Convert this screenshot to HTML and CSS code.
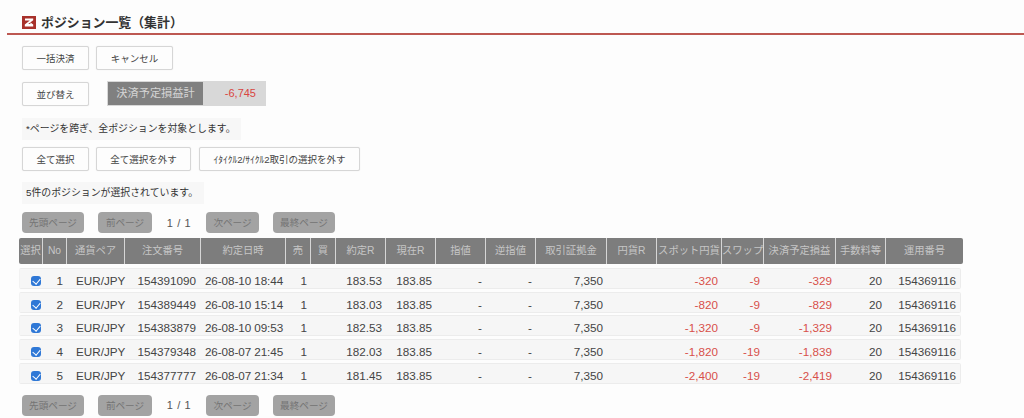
FILE: index.html
```html
<!DOCTYPE html>
<html lang="ja">
<head>
<meta charset="utf-8">
<title>ポジション一覧（集計）</title>
<link rel="stylesheet" href="styles.css">
</head>
<body>
<header class="title-bar">
  <svg class="logo" viewBox="0 0 14 13" width="14" height="13" aria-hidden="true">
    <rect width="14" height="13" fill="#a8312b"/>
    <path d="M3 2.6h8.2v1.7L6.2 8h2.2V6.6l2.8 1.8V10.4H2.8V8.6L7.8 4.4H3z" fill="#fff"/>
  </svg>
  <h1>ポジション一覧（集計）</h1>
</header>
<main class="content">
  <div class="btn-row first">
    <button class="btn w67">一括決済</button>
    <button class="btn w77">キャンセル</button>
  </div>
  <div class="btn-row second">
    <button class="btn w67">並び替え</button>
    <div class="total"><span class="total-label">決済予定損益計</span><span class="total-value">-6,745</span></div>
  </div>
  <p class="note note-a">*ページを跨ぎ、全ポジションを対象とします。</p>
  <div class="btn-row third">
    <button class="btn w67">全て選択</button>
    <button class="btn w95">全て選択を外す</button>
    <button class="btn w161">ｲﾀｲｸﾙ2/ｻｲｸﾙ2取引の選択を外す</button>
  </div>
  <p class="note note-b">5件のポジションが選択されています。</p>
  <nav class="pager top">
    <span class="pg w62">先頭ページ</span>
    <span class="pg w54">前ページ</span>
    <span class="count">1 / 1</span>
    <span class="pg w53">次ページ</span>
    <span class="pg w62">最終ページ</span>
  </nav>
</main>
<section class="grid-wrap">
  <div class="head">
    <div>選択</div><div>No</div><div>通貨ペア</div><div>注文番号</div><div>約定日時</div><div>売</div><div>買</div><div>約定R</div><div>現在R</div><div>指値</div><div>逆指値</div><div>取引証拠金</div><div>円貨R</div><div>スポット円貨</div><div>スワップ</div><div>決済予定損益</div><div>手数料等</div><div>運用番号</div>
  </div>
  <div class="rows">
    <div class="row"><span class="chk"><input type="checkbox" checked></span><span class="r">1</span><span class="l">EUR/JPY</span><span class="r">154391090</span><span class="c">26-08-10 18:44</span><span class="r">1</span><span></span><span class="r">183.53</span><span class="r">183.85</span><span class="r">-</span><span class="r">-</span><span class="r">7,350</span><span></span><span class="r red">-320</span><span class="r red">-9</span><span class="r red">-329</span><span class="r">20</span><span class="r">154369116</span></div>
    <div class="row"><span class="chk"><input type="checkbox" checked></span><span class="r">2</span><span class="l">EUR/JPY</span><span class="r">154389449</span><span class="c">26-08-10 15:14</span><span class="r">1</span><span></span><span class="r">183.03</span><span class="r">183.85</span><span class="r">-</span><span class="r">-</span><span class="r">7,350</span><span></span><span class="r red">-820</span><span class="r red">-9</span><span class="r red">-829</span><span class="r">20</span><span class="r">154369116</span></div>
    <div class="row"><span class="chk"><input type="checkbox" checked></span><span class="r">3</span><span class="l">EUR/JPY</span><span class="r">154383879</span><span class="c">26-08-10 09:53</span><span class="r">1</span><span></span><span class="r">182.53</span><span class="r">183.85</span><span class="r">-</span><span class="r">-</span><span class="r">7,350</span><span></span><span class="r red">-1,320</span><span class="r red">-9</span><span class="r red">-1,329</span><span class="r">20</span><span class="r">154369116</span></div>
    <div class="row"><span class="chk"><input type="checkbox" checked></span><span class="r">4</span><span class="l">EUR/JPY</span><span class="r">154379348</span><span class="c">26-08-07 21:45</span><span class="r">1</span><span></span><span class="r">182.03</span><span class="r">183.85</span><span class="r">-</span><span class="r">-</span><span class="r">7,350</span><span></span><span class="r red">-1,820</span><span class="r red">-19</span><span class="r red">-1,839</span><span class="r">20</span><span class="r">154369116</span></div>
    <div class="row"><span class="chk"><input type="checkbox" checked></span><span class="r">5</span><span class="l">EUR/JPY</span><span class="r">154377777</span><span class="c">26-08-07 21:34</span><span class="r">1</span><span></span><span class="r">181.45</span><span class="r">183.85</span><span class="r">-</span><span class="r">-</span><span class="r">7,350</span><span></span><span class="r red">-2,400</span><span class="r red">-19</span><span class="r red">-2,419</span><span class="r">20</span><span class="r">154369116</span></div>
  </div>
</section>
<nav class="pager bottom">
  <span class="pg w62">先頭ページ</span>
  <span class="pg w54">前ページ</span>
  <span class="count">1 / 1</span>
  <span class="pg w53">次ページ</span>
  <span class="pg w62">最終ページ</span>
</nav>
</body>
</html>
```
FILE: styles.css
```css
:root {
  --cols: 24px 24px 58px 76px 85px 25px 25px 50px 50px 50px 50px 71px 50px 65px 42px 72px 50px 77px;
}
* { box-sizing: border-box; }
html, body { margin: 0; padding: 0; }
body {
  width: 1024px;
  height: 418px;
  overflow: hidden;
  background: #fdfdfd;
  color: #444;
  font-family: "Liberation Sans", "Noto Sans CJK JP", sans-serif;
  font-size: 11.7px;
}
.title-bar {
  height: 35px;
  margin-left: 7px;
  padding: 16px 0 0 15px;
  display: flex;
  align-items: flex-start;
  gap: 5px;
  border-bottom: 2px solid #bd5852;
}
.logo { flex: none; }
h1 {
  margin: 0;
  font-size: 12.9px;
  line-height: 13px;
  font-weight: 700;
  color: #333;
}
.content { padding-left: 22px; }
.btn-row { display: flex; gap: 7px; align-items: center; }
.btn-row.first { margin-top: 11px; }
.btn-row.second { margin-top: 11px; gap: 18px; }
.btn-row.third { margin-top: 7px; gap: 7px; }
.btn {
  height: 24px;
  padding: 0;
  background: #fdfdfd;
  border: 1px solid #d6d6d6;
  border-radius: 2px;
  box-shadow: 0 0 1px #ddd;
  font: 9.5px "Liberation Sans", "Noto Sans CJK JP", sans-serif;
  color: #444;
}
.w67 { width: 67px; }
.w77 { width: 77px; }
.w95 { width: 95px; }
.w161 { width: 161px; }
.third .w161 { margin-left: 1px; }
.total {
  width: 159px;
  height: 25px;
  padding: 1px;
  display: flex;
  background: #d8d8d8;
}
.total-label {
  width: 95px;
  height: 23px;
  background: #808080;
  color: #d5d5d5;
  font-size: 11.2px;
  line-height: 22px;
  text-align: center;
}
.total-value {
  flex: 1;
  text-align: right;
  padding-right: 9px;
  color: #d8453f;
  font-size: 11px;
  line-height: 23px;
}
.note {
  margin: 0;
  background: #f7f7f7;
  height: 22px;
  line-height: 22px;
  padding-left: 4px;
  font-size: 9.9px;
  color: #333;
}
.note-a { margin-top: 12px; width: 219px; }
.note-b { margin-top: 11px; width: 182px; }
.pager { display: flex; align-items: center; }
.pager.top { margin-top: 8px; height: 21px; }
.pager.bottom { margin: 11px 0 0 22px; height: 21px; }
.pg {
  height: 21px;
  line-height: 21px;
  border-radius: 4px;
  background: #a3a3a3;
  color: #747474;
  text-align: center;
  font-size: 9.6px;
}
.w62 { width: 62px; }
.w54 { width: 54px; }
.w53 { width: 53px; }
.pager .pg:first-child { margin-right: 14px; }
.count {
  width: 54px;
  text-align: center;
  font-size: 11px;
  letter-spacing: .6px;
  color: #555;
}
.pager .pg:nth-child(4) { margin-right: 14px; }
.grid-wrap { padding-left: 19px; margin-top: 5px; }
.head {
  width: 944px;
  height: 26px;
  display: grid;
  grid-template-columns: var(--cols);
  border-radius: 2px;
  overflow: hidden;
}
.head div {
  background: #7d7d7d;
  color: #c6c6c6;
  text-align: center;
  line-height: 26px;
  font-size: 10.3px;
  white-space: nowrap;
  overflow: hidden;
  border-right: 1px solid #d6d6d6;
}
.head div:last-child { border-right: 0; }
.rows { margin-top: 4px; width: 942px; display: flex; flex-direction: column; gap: 2.7px; }
.row {
  height: 21px;
  display: grid;
  grid-template-columns: var(--cols);
  background: #f6f6f6;
  border: 1px solid #ececec;
  border-left-color: #f2f2f2;
  border-radius: 2px;
  line-height: 23px;
  white-space: nowrap;
}
.row span { display: block; }
.c { text-align: center; letter-spacing: -.08px; padding-right: 1px; }
.l { padding-left: 8px; }
.r { text-align: right; padding-right: 5px; }
.red { color: #d8504a; }
.row .r:nth-child(4) { padding-right: 6px; }
.row .r:nth-child(18) { padding-right: 8px; }
.chk { padding-left: 11px; }
input[type=checkbox] {
  appearance: none;
  display: block;
  position: relative;
  width: 10px;
  height: 10px;
  margin: 7px 0 0;
  border-radius: 3px;
  background: #2f78d6;
}
input[type=checkbox]::after {
  content: "";
  position: absolute;
  left: 3px;
  top: 1px;
  width: 4px;
  height: 6px;
  border: solid #fff;
  border-width: 0 1.5px 1.5px 0;
  transform: rotate(40deg);
}
```
